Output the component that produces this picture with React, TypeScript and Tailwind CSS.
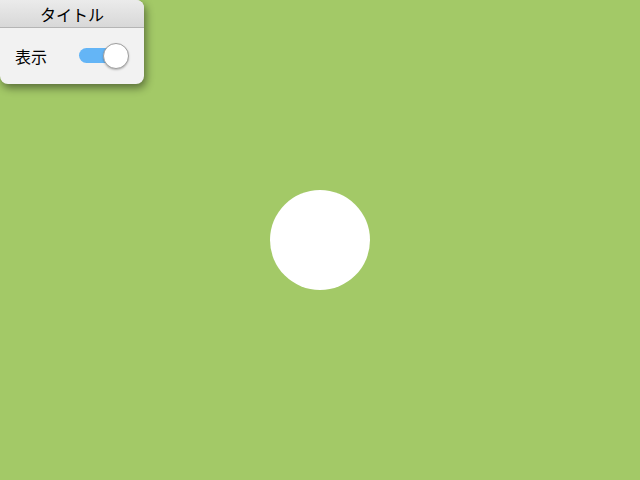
export default function App() {
    return (
        <div className="relative w-[640px] h-[480px] bg-[#a3c967] overflow-hidden" style={{ fontFamily: '"Noto Sans CJK JP", "Liberation Sans", sans-serif' }}>
            <div className="absolute left-0 top-0 w-[144px] rounded-b-lg rounded-tr-lg bg-[#f2f2f2] shadow-[2px_4px_8px_rgba(0,0,0,0.45)] overflow-hidden">
                <div className="h-[28px] flex items-center justify-center bg-gradient-to-b from-[#ebebeb] to-[#d8d8d8] border-b border-[#b5b5b5] text-[16px] text-black leading-none">
                    タイトル
                </div>
                <div className="h-[56px] flex items-center justify-between pl-[15px] pr-[15px] pb-[1px]">
                    <span className="text-[16px] text-black leading-none">表示</span>
                    <div className="relative w-[50px] h-[26px] flex items-center">
                        <div className="absolute left-0 w-[34px] h-[15px] rounded-full bg-[#64b5f6]" />
                        <div className="absolute right-0 w-[26px] h-[26px] rounded-full bg-white border border-[#9e9e9e] shadow-[0_1px_2px_rgba(0,0,0,0.25)]" />
                    </div>
                </div>
            </div>
            <div className="w-full h-full flex items-center justify-center">
                <div className="w-[100px] h-[100px] rounded-full bg-white" />
            </div>
        </div>
    );
}
